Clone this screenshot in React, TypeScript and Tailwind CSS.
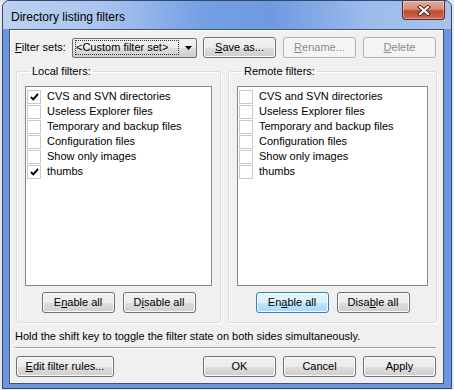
import type { ReactNode } from 'react';

const FONT = { fontFamily: '"Liberation Sans", Arial, sans-serif' };

const LOCAL = [
  { label: 'CVS and SVN directories', on: true },
  { label: 'Useless Explorer files', on: false },
  { label: 'Temporary and backup files', on: false },
  { label: 'Configuration files', on: false },
  { label: 'Show only images', on: false },
  { label: 'thumbs', on: true },
];

const REMOTE = LOCAL.map((f) => ({ label: f.label, on: false }));

type BtnKind = 'normal' | 'hot' | 'disabled';

const BTN: Record<BtnKind, string> = {
  normal:
    'border-[#707070] bg-[linear-gradient(to_bottom,#f2f2f2_0%,#ebebeb_50%,#dddddd_51%,#cfcfcf_100%)] shadow-[inset_0_0_0_1px_#fbfbfb] text-black',
  hot: 'border-[#3c7fb1] bg-[linear-gradient(to_bottom,#eaf6fd_0%,#d9f0fc_50%,#bee6fd_51%,#a7d9f5_100%)] shadow-[inset_0_0_0_1px_#f4fbfe] text-black',
  disabled: 'border-[#adb2b5] bg-[#f4f4f4] text-[#8b8b8b]',
};

function Btn({ children, kind = 'normal', w = 'w-[73px]' }: { children: ReactNode; kind?: BtnKind; w?: string }) {
  return (
    <button className={`${w} h-[21px] shrink-0 rounded-[3px] border flex items-center justify-center leading-none ${BTN[kind]}`}>
      {children}
    </button>
  );
}

function Check() {
  return (
    <svg width="9" height="8" viewBox="0 0 9 8">
      <path d="M1 4 L3.2 6.3 L8 1" fill="none" stroke="#000" strokeWidth="1.9" />
    </svg>
  );
}

function FilterList({ items }: { items: { label: string; on: boolean }[] }) {
  return (
    <div className="h-[200px] border border-[#828790] bg-white pt-[2px]">
      {items.map((it) => (
        <div key={it.label} className="h-[15px] flex items-center">
          <span className="ml-[1px] w-[14px] h-[14px] border border-[#c9c9c9] bg-white flex items-center justify-center">
            {it.on && <Check />}
          </span>
          <span className="ml-[6px]">{it.label}</span>
        </div>
      ))}
    </div>
  );
}

function Group({ title, w, items, enable, disable, hot }: {
  title: string; w: string; items: { label: string; on: boolean }[]; enable: ReactNode; disable: ReactNode; hot?: boolean;
}) {
  return (
    <fieldset className={`${w} border border-[#d5dfe5] rounded-[3px] shadow-[1px_1px_0_#ffffff,inset_1px_1px_0_#ffffff] px-[8px] pb-[9px]`}>
      <legend className="ml-[5px] px-[2px] leading-[15px]">{title}</legend>
      <div className="mt-[7px]">
        <FilterList items={items} />
      </div>
      <div className="mt-[6px] flex justify-center gap-[8px]">
        <Btn kind={hot ? 'hot' : 'normal'}>{enable}</Btn>
        <Btn>{disable}</Btn>
      </div>
    </fieldset>
  );
}

export default function App() {
  return (
    <div className="w-[454px] h-[390px] bg-[#e6e8ec] pl-[2px] text-[11px] leading-[15px] text-black" style={FONT}>
      <div className="w-[450px] h-[389px] rounded-t-[7px] border border-[#34486b] bg-[#6d97dd] flex flex-col">
        <div className="h-[28px] shrink-0 flex items-start rounded-t-[6px] bg-[linear-gradient(to_right,#bcd1ef_0%,#aac5ee_22%,#739fe3_45%,#6f9ae1_60%,#9dbcec_82%,#a6c2ec_100%)]">
          <span className="pl-[8px] pt-[8px] text-[12px] leading-[16px] text-black">Directory listing filters</span>
          <div className="ml-auto mr-[6px] w-[43px] h-[19px] rounded-b-[4px] border border-t-0 border-[#5b2a22] bg-[linear-gradient(to_bottom,#e3a797_0%,#d78d79_45%,#c34a33_55%,#cc6b52_100%)] shadow-[inset_0_0_0_1px_rgba(255,255,255,0.35)] flex items-center justify-center">
            <svg width="14" height="11" viewBox="0 0 14 11">
              <path d="M3 2 L11 9 M11 2 L3 9" stroke="#4a2219" strokeWidth="4" strokeLinecap="square" />
              <path d="M3 2 L11 9 M11 2 L3 9" stroke="#ffffff" strokeWidth="2.2" strokeLinecap="square" />
            </svg>
          </div>
        </div>

        <div className="ml-[6px] mr-[7px] h-[355px] border border-[#3f5374] bg-[#f0f0f0] shadow-[inset_1px_1px_0_#ffffff] flex flex-col">
          <div className="pt-[7px] flex items-center">
            <span className="w-[62px] pl-[5px]"><u>F</u>ilter sets:</span>
            <div className="w-[125px] h-[20px] rounded-[2px] border border-[#707070] bg-[linear-gradient(to_bottom,#f2f2f2_0%,#ebebeb_50%,#dddddd_51%,#cfcfcf_100%)] flex items-center pl-[2px] pr-[4px]">
              <span className="w-[104px] h-[15px] outline-1 outline-dotted outline-[#333] -outline-offset-1 pl-[1px]">&lt;Custom filter set&gt;</span>
              <svg className="ml-auto" width="7" height="4" viewBox="0 0 7 4">
                <path d="M0 0 H7 L3.5 4 Z" fill="#000" />
              </svg>
            </div>
            <div className="ml-[6px] flex gap-[7px]">
              <Btn><span><u>S</u>ave as...</span></Btn>
              <Btn kind="disabled"><span><u>R</u>ename...</span></Btn>
              <Btn kind="disabled"><span><u>D</u>elete</span></Btn>
            </div>
          </div>

          <div className="mt-[6px] ml-[6px] flex gap-[7px]">
            <Group
              title="Local filters:"
              w="w-[205px]"
              items={LOCAL}
              enable={<span>E<u>n</u>able all</span>}
              disable={<span>D<u>i</u>sable all</span>}
            />
            <Group
              title="Remote filters:"
              w="w-[209px]"
              items={REMOTE}
              hot
              enable={<span>En<u>a</u>ble all</span>}
              disable={<span>Disa<u>b</u>le all</span>}
            />
          </div>

          <div className="mt-[6px] pl-[5px]">Hold the shift key to toggle the filter state on both sides simultaneously.</div>
          <div className="mt-[3px] ml-[5px] mr-[7px] h-[2px] border-t border-[#a0a0a0] border-b border-b-white" />

          <div className="mt-[7px] ml-[6px] flex">
            <Btn w="w-[98px]"><span><u>E</u>dit filter rules...</span></Btn>
            <div className="ml-auto mr-[7px] flex gap-[7px]">
              <Btn>OK</Btn>
              <Btn>Cancel</Btn>
              <Btn>Apply</Btn>
            </div>
          </div>
        </div>
      </div>
    </div>
  );
}
